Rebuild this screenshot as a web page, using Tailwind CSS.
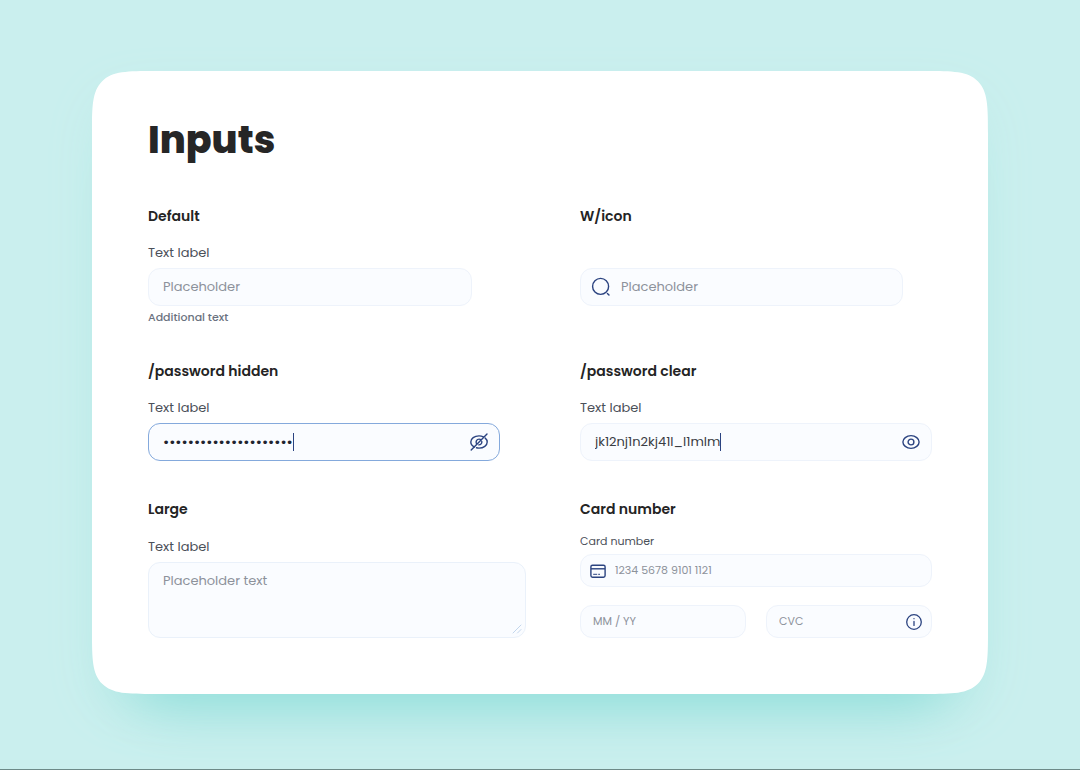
<!DOCTYPE html>
<html lang="en">

<head>
    <meta charset="UTF-8">
    <meta name="viewport" content="width=device-width, initial-scale=1.0">
    <title>Inputs</title>
    <script src="https://cdn.jsdelivr.net/npm/@tailwindcss/browser@4"></script>
</head>

<body class="min-h-screen bg-[#caefee] border-b border-[#6d8a88] px-[92px] pt-[71px] pb-[75px] font-[Poppins,Inter,sans-serif] text-[13px] text-[#4b5059]">
    <main class="bg-white rounded-[64px] [corner-shape:squircle] px-14 pt-[45px] pb-14 shadow-[0_52px_56px_-40px_#8fdeda,0_20px_50px_-8px_#bdebe8]">
        <h1 class="text-[38px] leading-12 font-extrabold text-[#262626] mb-10">Inputs</h1>

        <div class="grid grid-cols-[27fr_22fr] gap-y-9">
            <!-- Default -->
            <section>
                <h2 class="text-sm leading-6 font-semibold text-[#242424] mb-[15px]">Default</h2>
                <label for="default" class="block leading-5 mb-[5px]">Text label</label>
                <input type="text" id="default" placeholder="Placeholder"
                    class="block w-3/4 h-[38px] px-3.5 rounded-xl border border-[#eef3fb] bg-[#fafcff] placeholder:text-[#8d929b] outline-none">
                <p class="mt-[5px] text-[11px] leading-3 font-medium text-[#6b7280]">Additional text</p>
            </section>

            <!-- With icon -->
            <section>
                <h2 class="text-sm leading-6 font-semibold text-[#242424] mb-10">W/icon</h2>
                <div class="flex items-center gap-2.5 w-11/12 h-[38px] px-2.5 rounded-xl border border-[#eef3fb] bg-[#fafcff]">
                    <svg class="size-5 shrink-0" viewBox="0 0 20 20" fill="none" stroke="#2b4380" stroke-width="1.4" stroke-linecap="round">
                        <circle cx="9.6" cy="9.4" r="8" />
                        <path d="M16.4 16.4 18 18" />
                    </svg>
                    <input type="search" aria-label="Search" placeholder="Placeholder"
                        class="flex-1 min-w-0 bg-transparent placeholder:text-[#8d929b] outline-none">
                </div>
            </section>

            <!-- Password hidden -->
            <section>
                <h2 class="text-sm leading-6 font-semibold text-[#242424] mb-[15px]">/password hidden</h2>
                <label for="hidden" class="block leading-5 mb-[5px]">Text label</label>
                <div class="flex items-center w-[352px] max-w-full h-[38px] pl-3.5 pr-2.5 rounded-xl border border-[#84a9dc] bg-[#fafcff]">
                    <input type="password" id="hidden" value="jk12nj1n2kj41l_l1mlm9"
                        class="field-sizing-content text-[15px] text-[#1f2430] outline-none">
                    <span class="w-px h-[18px] bg-[#2b4380]"></span>
                    <button type="button" aria-label="Show password" class="ml-auto">
                        <svg class="size-5" viewBox="0 0 20 20" fill="none" stroke="#2b4380" stroke-width="1.4" stroke-linecap="round">
                            <path d="M5.4 15C3.2 13.9 1.8 12 1.8 10c0-3.5 3.6-6.1 8.2-6.1 1.6 0 3.1.3 4.4.9M16.2 6.1c1.3 1.1 2 2.4 2 3.9 0 3.5-3.6 6.1-8.2 6.1-.9 0-1.7-.1-2.5-.3" />
                            <path d="M7.5 11.8C6.4 9.5 7.7 7.1 10.1 7.1c.8 0 1.4.2 1.9.6M12.8 9.5c.3 1.9-1 3.4-3 3.4" />
                            <path d="M18 2 2.2 18" />
                        </svg>
                    </button>
                </div>
            </section>

            <!-- Password clear -->
            <section>
                <h2 class="text-sm leading-6 font-semibold text-[#242424] mb-[15px]">/password clear</h2>
                <label for="clear" class="block leading-5 mb-[5px]">Text label</label>
                <div class="flex items-center h-[38px] pl-3.5 pr-2.5 rounded-xl border border-[#eef3fb] bg-[#fafcff]">
                    <input type="text" id="clear" value="jk12nj1n2kj41l_l1mlm"
                        class="field-sizing-content text-[#3a3d44] outline-none">
                    <span class="w-px h-[18px] bg-[#2b4380]"></span>
                    <button type="button" aria-label="Hide password" class="ml-auto">
                        <svg class="size-5" viewBox="0 0 20 20" fill="none" stroke="#2b4380" stroke-width="1.4">
                            <path d="M1.9 10C1.9 6.8 5.5 3.6 10 3.6S18.1 6.8 18.1 10 14.5 16.4 10 16.4 1.9 13.2 1.9 10Z" />
                            <circle cx="10" cy="10" r="2.9" />
                        </svg>
                    </button>
                </div>
            </section>

            <!-- Large -->
            <section>
                <h2 class="text-sm leading-6 font-semibold text-[#242424] mb-4">Large</h2>
                <label for="large" class="block leading-5 mb-[5px]">Text label</label>
                <div class="relative w-7/8">
                    <textarea id="large" placeholder="Placeholder text"
                        class="block w-full h-[76px] px-3.5 py-2 leading-5 rounded-xl border border-[#eaf1fa] bg-[#fafcff] placeholder:text-[#8d929b] resize-none outline-none"></textarea>
                    <svg class="absolute right-1 bottom-1 size-2.5" viewBox="0 0 10 10" fill="none" stroke="#c3d6ec" stroke-linecap="round">
                        <path d="M1 9 9 1M5.5 9 9 5.5" />
                    </svg>
                </div>
            </section>

            <!-- Card number -->
            <section>
                <h2 class="text-sm leading-6 font-semibold text-[#242424] mb-3">Card number</h2>
                <label for="card" class="block text-[11px] leading-4 mb-[5px]">Card number</label>
                <div class="flex items-center gap-2 h-[33px] px-2 rounded-xl border border-[#eef3fb] bg-[#fafcff] mb-[18px]">
                    <svg class="size-[18px] shrink-0" viewBox="0 0 18 18" fill="none" stroke="#2b4380" stroke-width="1.4">
                        <rect x="1.9" y="3.2" width="14.2" height="12" rx="1.6" />
                        <path d="M2 6.8h14" />
                        <path d="M4.2 12.3h4M9.2 12.3h1.8" stroke-width="1" />
                    </svg>
                    <input type="text" id="card" placeholder="1234 5678 9101 1121"
                        class="flex-1 min-w-0 text-[11px] placeholder:text-[#8d929b] outline-none">
                </div>
                <div class="grid grid-cols-2 gap-5">
                    <input type="text" aria-label="Expiry date" placeholder="MM / YY"
                        class="min-w-0 h-[33px] px-3 text-[11px] rounded-xl border border-[#eef3fb] bg-[#fafcff] placeholder:text-[#8d929b] outline-none">
                    <div class="flex items-center h-[33px] pl-3 pr-2 rounded-xl border border-[#eef3fb] bg-[#fafcff]">
                        <input type="text" aria-label="CVC" placeholder="CVC"
                            class="flex-1 min-w-0 text-[11px] placeholder:text-[#8d929b] outline-none">
                        <button type="button" aria-label="About the CVC">
                            <svg class="size-[18px]" viewBox="0 0 18 18" fill="none" stroke="#2b4380" stroke-width="1.3" stroke-linecap="round">
                                <circle cx="9" cy="9" r="7.3" />
                                <path d="M9 8.4v4M9 5.6v.1" />
                            </svg>
                        </button>
                    </div>
                </div>
            </section>
        </div>
    </main>
</body>

</html>
